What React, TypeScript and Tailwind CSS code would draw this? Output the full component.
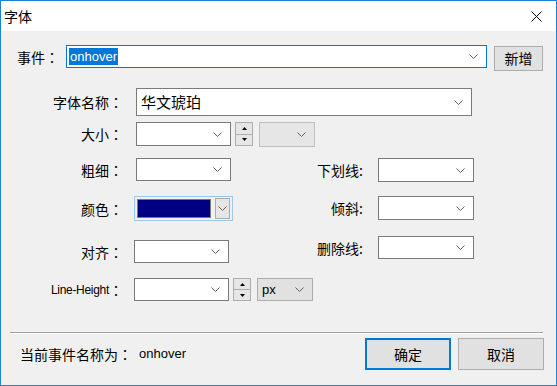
import type { ReactNode } from 'react'

// ─────────────────────────────────────────────────
// Small win32-style controls
// ─────────────────────────────────────────────────

const cjk = "font-['Noto_Sans_CJK_SC','Noto_Sans',sans-serif]"
const latin = "font-['Liberation_Sans','Noto_Sans_CJK_SC',sans-serif]"
// TC punctuation sits centred in the em box, like the original dialog font
const colonFont = "font-['Noto_Sans_CJK_TC',sans-serif]"

function Colon() {
  return <span className={colonFont}>：</span>
}

function Chevron({ color = '#606060' }: { color?: string }) {
  return (
    <svg width="9" height="5" viewBox="0 0 9 5" className="shrink-0">
      <polyline points="0.5,0.5 4.5,4.5 8.5,0.5" fill="none" stroke={color} strokeWidth="1" />
    </svg>
  )
}

function Combo({
  className = '',
  children,
}: {
  className?: string
  children?: ReactNode
}) {
  return (
    <div className={`flex items-center shrink-0 border pr-[8px] ${className}`}>
      <div className="flex-1 min-w-0 flex items-center">{children}</div>
      <Chevron />
    </div>
  )
}

function Spinner({ className = '' }: { className?: string }) {
  return (
    <div className={`flex flex-col shrink-0 w-[18px] border border-[#adadad] bg-[#e6e6e6] ${className}`}>
      <div className="flex-1 flex items-center justify-center border-b border-[#adadad]">
        <svg width="5" height="3" viewBox="0 0 5 3">
          <polygon points="2.5,0 5,3 0,3" fill="#000" />
        </svg>
      </div>
      <div className="flex-1 flex items-center justify-center">
        <svg width="5" height="3" viewBox="0 0 5 3">
          <polygon points="0,0 5,0 2.5,3" fill="#000" />
        </svg>
      </div>
    </div>
  )
}

function Label({ children, className = '' }: { children: ReactNode; className?: string }) {
  return (
    <div className={`shrink-0 flex items-center justify-end text-[14px] leading-none text-black ${cjk} ${className}`}>
      {children}
    </div>
  )
}

// ─────────────────────────────────────────────────
// Dialog
// ─────────────────────────────────────────────────

export default function App() {
  return (
    <div className="w-[557px] h-[386px] border border-[#1883d7] flex flex-col bg-[#f0f0f0] overflow-hidden">
      {/* Title bar */}
      <div className="h-[30px] shrink-0 bg-white flex items-center justify-between pl-[3px] pr-[14px]">
        <span className={`text-[14px] text-black ${cjk}`}>字体</span>
        <svg width="11" height="11" viewBox="0 0 11 11">
          <path d="M0.5 0.5 L10.5 10.5 M10.5 0.5 L0.5 10.5" stroke="#000" strokeWidth="1" />
        </svg>
      </div>

      {/* Event row */}
      <div className="flex items-start mt-[14px] pl-[16px]">
        <Label className="w-[49px] h-[23px] !justify-start">
          事件<Colon />
        </Label>
        <Combo className="w-[421px] h-[23px] border-[#0078d7] bg-white">
          <span className={`ml-[2px] px-[1px] bg-[#0078d7] text-white text-[13px] leading-[17px] ${latin}`}>onhover</span>
        </Combo>
        <button className={`ml-[7px] mt-px w-[49px] h-[25px] border border-[#adadad] bg-[#e1e1e1] text-[14px] text-black ${cjk}`}>
          新增
        </button>
      </div>

      {/* Font name */}
      <div className="flex items-start mt-[17px]">
        <Label className="w-[122px] h-[28px]">
          字体名称<Colon />
        </Label>
        <Combo className="ml-[13px] w-[336px] h-[28px] border-[#7a7a7a] bg-white">
          <span className={`ml-[4px] text-[15px] text-black ${cjk}`}>华文琥珀</span>
        </Combo>
      </div>

      {/* Size */}
      <div className="flex items-start mt-[6px]">
        <Label className="w-[122px] h-[24px]">
          大小<Colon />
        </Label>
        <Combo className="ml-[13px] w-[95px] h-[24px] border-[#7a7a7a] bg-white" />
        <Spinner className="ml-[4px] h-[24px]" />
        <Combo className="ml-[6px] w-[56px] h-[25px] border-[#bfbfbf] bg-[#e6e6e6]" />
      </div>

      {/* Two-column block */}
      <div className="flex items-start mt-[11px]">
        <div className="w-[300px] flex flex-col">
          <div className="flex items-start">
            <Label className="w-[122px] h-[23px]">
              粗细<Colon />
            </Label>
            <Combo className="ml-[13px] w-[95px] h-[23px] border-[#7a7a7a] bg-white" />
          </div>
          <div className="flex items-start mt-[15px]">
            <Label className="w-[122px] h-[25px]">
              颜色<Colon />
            </Label>
            <div className="ml-[11px] w-[99px] h-[25px] border border-[#99c9ef] flex items-center p-[2px] gap-[4px]">
              <div className="w-[76px] h-[19px] border border-[#7a7a7a] bg-[#000080]" />
              <div className="w-[15px] h-[21px] border border-[#adadad] bg-[#e6e6e6] flex items-center justify-center">
                <Chevron />
              </div>
            </div>
          </div>
          <div className="flex items-start mt-[19px]">
            <Label className="w-[122px] h-[23px]">
              对齐<Colon />
            </Label>
            <Combo className="ml-[11px] w-[95px] h-[23px] border-[#7a7a7a] bg-white" />
          </div>
        </div>

        <div className="flex flex-col">
          <div className="flex items-start">
            <Label className="w-[62px] h-[24px]">下划线:</Label>
            <Combo className="ml-[15px] w-[96px] h-[24px] border-[#7a7a7a] bg-white" />
          </div>
          <div className="flex items-start mt-[14px]">
            <Label className="w-[62px] h-[24px]">倾斜:</Label>
            <Combo className="ml-[15px] w-[96px] h-[24px] border-[#7a7a7a] bg-white" />
          </div>
          <div className="flex items-start mt-[16px]">
            <Label className="w-[62px] h-[23px]">删除线:</Label>
            <Combo className="ml-[15px] w-[96px] h-[23px] border-[#7a7a7a] bg-white" />
          </div>
        </div>
      </div>

      {/* Line height */}
      <div className="flex items-start mt-[15px]">
        <Label className="w-[122px] h-[23px]">
          <span className={`text-[12px] tracking-[-0.3px] ${latin}`}>Line-Height</span>
          <Colon />
        </Label>
        <Combo className="ml-[11px] w-[95px] h-[23px] border-[#7a7a7a] bg-white" />
        <Spinner className="ml-[4px] h-[23px]" />
        <Combo className="ml-[6px] w-[56px] h-[23px] border-[#adadad] bg-[#e1e1e1]">
          <span className={`ml-[4px] text-[13px] text-black ${latin}`}>px</span>
        </Combo>
      </div>

      {/* Separator */}
      <div className="mt-[31px] ml-[9px] w-[533px] border-t border-[#a0a0a0] border-b border-b-white" />

      {/* Footer */}
      <div className="flex items-center mt-[4px] pl-[19px]">
        <span className={`text-[14px] text-black ${cjk}`}>
          当前事件名称为<Colon />
        </span>
        <span className={`ml-[7px] text-[13px] text-black ${latin}`}>onhover</span>
        <div className="flex-1" />
        <button className={`w-[86px] h-[32px] border-2 border-[#0078d7] bg-[#e1e1e1] text-[14px] text-black ${cjk}`}>
          确定
        </button>
        <button className={`ml-[7px] mr-[12px] w-[86px] h-[32px] border border-[#adadad] bg-[#e1e1e1] text-[14px] text-black ${cjk}`}>
          取消
        </button>
      </div>
    </div>
  )
}
